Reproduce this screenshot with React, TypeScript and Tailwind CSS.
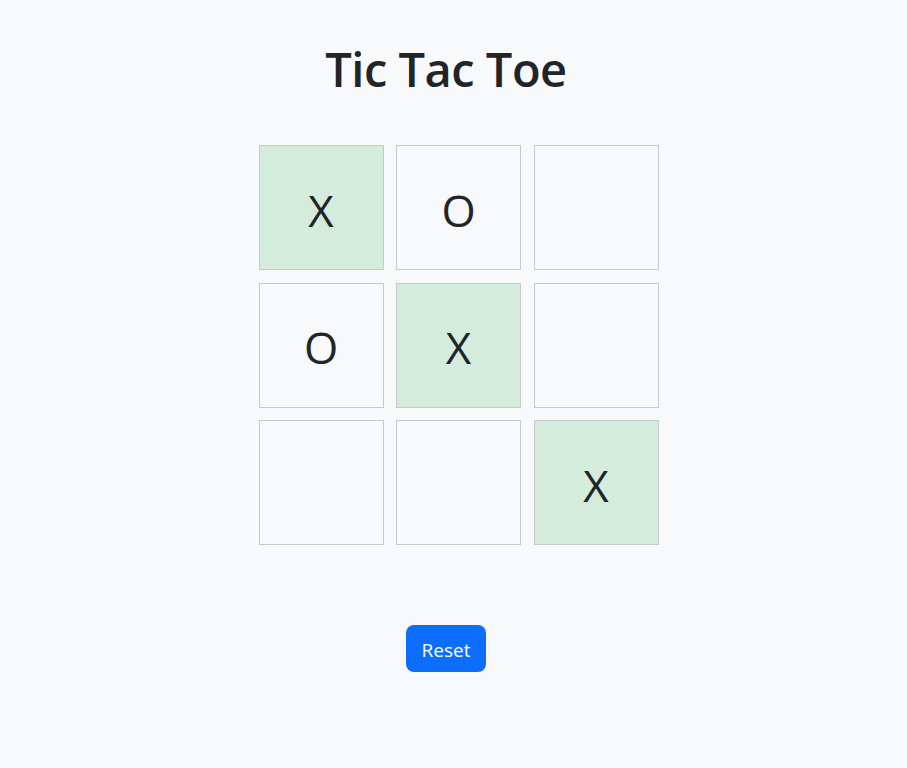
import React, { useState } from 'react';

const initial: (string | null)[] = ['X', 'O', null, 'O', 'X', null, null, null, 'X'];
const winLine = [0, 4, 8];

const App = () => {
  const [board, setBoard] = useState(initial);

  return (
    <div className="min-h-[768px] bg-[#f8f9fa] text-[#212529] font-['Open_Sans',sans-serif]">
      <div className="w-[892px] flex flex-col items-center pt-[33px]">
        <h1 className="text-[47px] font-semibold leading-[72px] tracking-[-0.5px]">Tic Tac Toe</h1>
        <div className="pl-[25px] mt-[40px]">
          <div className="grid grid-cols-[125px_125px_125px] gap-[12.5px]">
            {board.map((v, i) => (
              <button
                key={i}
                onClick={() => {
                  const next = [...board];
                  next[i] = 'X';
                  setBoard(next);
                }}
                className={`w-[125px] h-[125px] border border-[#c8c9ca] flex items-center justify-center pt-[4px] text-[44px] font-normal ${
                  winLine.includes(i) && v ? 'bg-[#d4ecdb]' : 'bg-[#f8f9fa]'
                }`}
              >
                {v}
              </button>
            ))}
          </div>
        </div>
        <button
          onClick={() => setBoard(Array(9).fill(null))}
          className="mt-[80px] h-[47px] px-4 pt-[3px] rounded-lg bg-[#0d6efd] text-white text-[19px]"
        >
          Reset
        </button>
      </div>
    </div>
  );
};

export default App;
